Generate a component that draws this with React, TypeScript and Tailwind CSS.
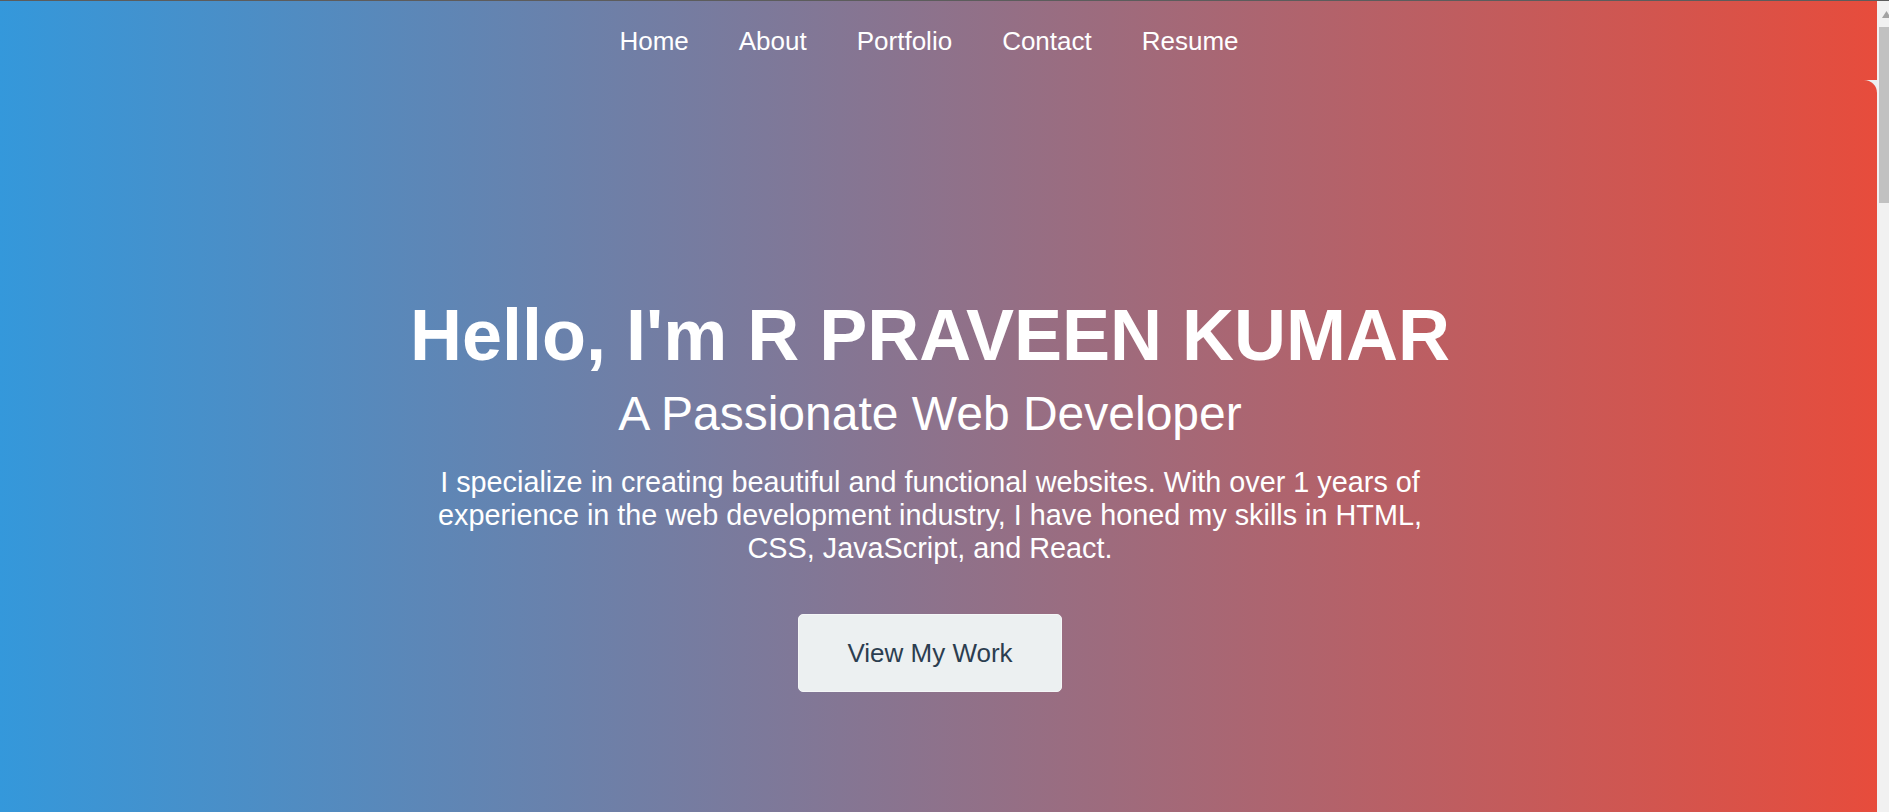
import * as React from "react"

const links = ["Home", "About", "Portfolio", "Contact", "Resume"]

function Scrollbar() {
    return (
        <div className="relative w-[12px] shrink-0 bg-[#f1f1f1]">
            <svg className="absolute left-[5px] top-[10px]" width="9" height="7" viewBox="0 0 9 7">
                <path d="M4.5 0 L9 7 L0 7 Z" fill="#a3a3a3" />
            </svg>
            <div className="absolute left-[2px] top-[26px] h-[176px] w-[10px] bg-[#c1c1c1]" />
        </div>
    )
}

export default function App() {
    return (
        <div
            className="flex h-screen w-full flex-col overflow-hidden bg-[#ecf0f1]"
            style={{ fontFamily: '"Liberation Sans", Arial, sans-serif' }}
        >
            <div className="h-px w-full shrink-0 bg-[#5c5c5c]" />
            <div className="flex min-h-0 flex-1">
                <div className="flex min-w-0 flex-1 flex-col">
                    <nav className="flex h-[79px] shrink-0 items-center justify-center gap-[50px] bg-linear-to-r/srgb from-[#3498db] to-[#e74c3c] pr-[19px]">
                        {links.map(item => (
                            <a key={item} href="#" className="text-[26px] leading-none text-white">
                                {item}
                            </a>
                        ))}
                    </nav>

                    <section className="flex flex-1 flex-col items-center rounded-tr-[13px] bg-linear-to-r/srgb from-[#3498db] to-[#e74c3c] pr-[17px] pt-[219px] text-center text-white">
                        <h1 className="text-[72px] font-bold leading-none">Hello, I'm R PRAVEEN KUMAR</h1>
                        <h2 className="mt-[19px] text-[48px] leading-none">A Passionate Web Developer</h2>
                        <p className="mt-[28px] max-w-[1000px] text-[28.8px] leading-[33px]">
                            I specialize in creating beautiful and functional websites. With over 1 years of experience in
                            the web development industry, I have honed my skills in HTML, CSS, JavaScript, and React.
                        </p>
                        <a
                            href="#"
                            className="mt-[49px] flex h-[78px] items-center rounded-[5px] border border-[#f4f6f7] bg-[#ecf0f1] px-[48px] text-[26px] leading-none text-[#2c3e50]"
                        >
                            View My Work
                        </a>
                    </section>
                </div>
                <Scrollbar />
            </div>
        </div>
    )
}
